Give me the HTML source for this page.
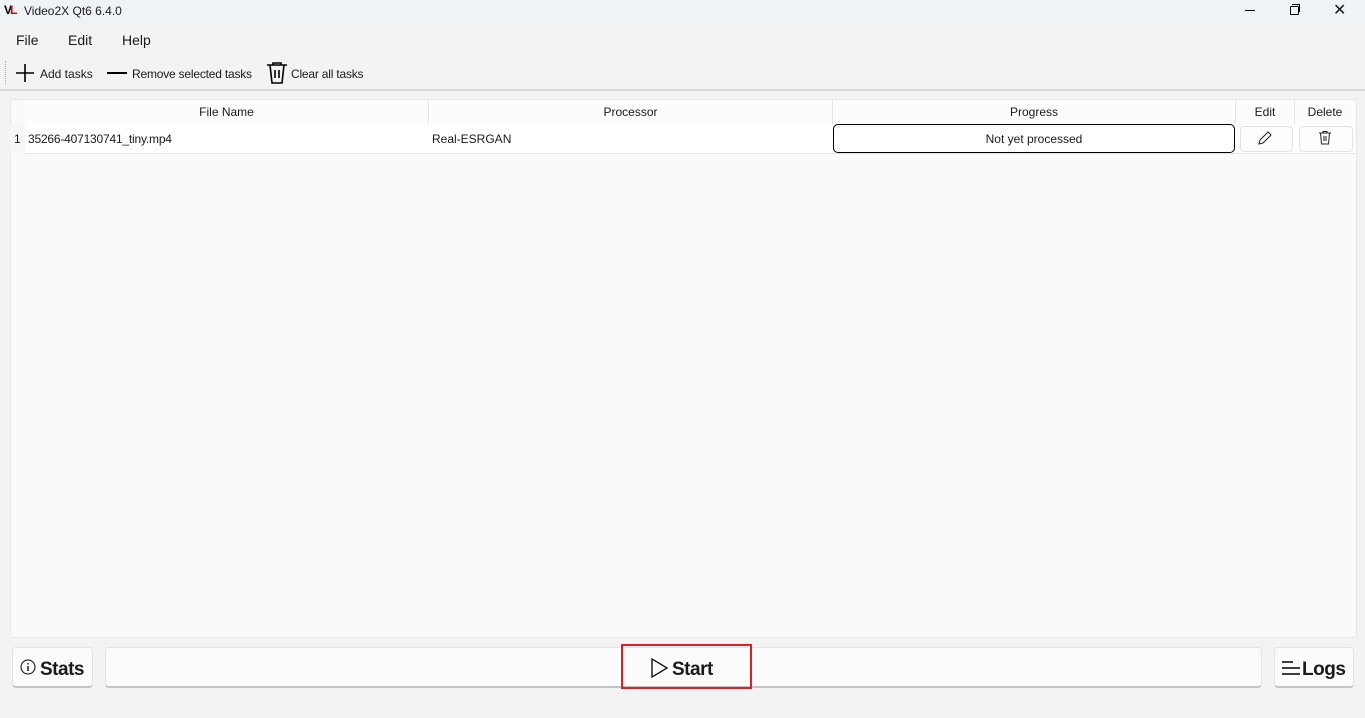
<!DOCTYPE html>
<html><head><style>
body{margin:0;width:1365px;height:718px;background:#f3f3f3;font-family:"Liberation Sans",sans-serif;font-size:12px;color:#1a1a1a;position:relative;overflow:hidden}
.a{position:absolute}
.title{left:0;top:0;width:1365px;height:24px;background:#eff3f8}
.hd{top:100px;height:24px;line-height:24px;text-align:center;border-right:1px solid #e5e5e5;border-bottom:1px solid #e5e5e5;background:#fcfcfc}
.btn{background:#fbfbfb;border:1px solid #e3e3e3;border-bottom:2px solid #c4c4c4;border-radius:4px;height:38px;top:647px}
.bt{font-weight:bold;font-size:19px;top:659px;letter-spacing:-0.5px}
</style></head><body>
<div class="a title"></div>
<div class="a" style="left:4px;top:3px;font-weight:bold;font-size:12px;color:#000;letter-spacing:-2px">V<span style="color:#c00">L</span></div>
<div class="a" style="left:24px;top:4px">Video2X Qt6 6.4.0</div>
<div class="a" style="left:1245px;top:10px;width:10px;height:1px;background:#000"></div>
<div class="a" style="left:1290px;top:6px;width:7px;height:7px;border:1px solid #000;border-radius:1px"></div>
<div class="a" style="left:1292px;top:4px;width:7px;height:7px;border-top:1px solid #000;border-right:1px solid #000"></div>
<div class="a" style="left:1333px;top:0px;font-size:16px">✕</div>
<div class="a" style="left:16px;top:32px;font-size:14px">File</div>
<div class="a" style="left:68px;top:32px;font-size:14px">Edit</div>
<div class="a" style="left:122px;top:32px;font-size:14px">Help</div>
<div class="a" style="left:0;top:57px;width:1365px;height:32px;border-bottom:2px solid #d8d8d8"></div>
<div class="a" style="left:5px;top:61px;height:24px;border-left:1px dotted #aaa"></div>
<svg class="a" style="left:15px;top:63px" width="20" height="20"><path d="M10 1V19M1 10H19" stroke="#000" stroke-width="1.6"/></svg>
<div class="a" style="left:40px;top:67px">Add tasks</div>
<div class="a" style="left:107px;top:72px;width:20px;height:2px;background:#000"></div>
<div class="a" style="left:132px;top:67px;letter-spacing:-0.2px">Remove selected tasks</div>
<svg class="a" style="left:265px;top:61px" width="24" height="24"><path d="M2 4H22M8 4V2H16V4M5 4L7 22H17L19 4M10 9V17M14 9V17" stroke="#000" stroke-width="1.6" fill="none"/></svg>
<div class="a" style="left:291px;top:67px;letter-spacing:-0.2px">Clear all tasks</div>
<div class="a" style="left:10px;top:99px;width:1345px;height:537px;background:#fafafa;border:1px solid #e8e8e8;border-radius:3px"></div>
<div class="a hd" style="left:25px;width:403px">File Name</div>
<div class="a hd" style="left:429px;width:403px">Processor</div>
<div class="a hd" style="left:833px;width:402px">Progress</div>
<div class="a hd" style="left:1236px;width:58px">Edit</div>
<div class="a hd" style="left:1295px;width:60px;border-right:none">Delete</div>
<div class="a" style="left:10px;top:124px;width:15px;height:29px;background:#f6f6f6"></div>
<div class="a" style="left:14px;top:132px">1</div>
<div class="a" style="left:25px;top:124px;width:1330px;height:29px;border-bottom:1px solid #e5e5e5;background:#fff"></div>
<div class="a" style="left:28px;top:132px;letter-spacing:-0.2px">35266-407130741_tiny.mp4</div>
<div class="a" style="left:432px;top:132px">Real-ESRGAN</div>
<div class="a" style="left:833px;top:124px;width:400px;height:27px;border:1px solid #000;border-radius:5px;text-align:center;line-height:28px;background:#fff">Not yet processed</div>
<div class="a" style="left:1240px;top:126px;width:51px;height:24px;border:1px solid #e3e3e3;border-radius:4px;background:#fdfdfd"></div>
<svg class="a" style="left:1257px;top:130px" width="16" height="16"><path d="M2 14L3 10L11 2L14 5L6 13Z" stroke="#222" fill="none"/></svg>
<div class="a" style="left:1299px;top:126px;width:52px;height:24px;border:1px solid #e3e3e3;border-radius:4px;background:#fdfdfd"></div>
<svg class="a" style="left:1317px;top:130px" width="16" height="16"><path d="M2 3H14M6 3V1.5H10V3M3.5 3L4.5 14H11.5L12.5 3M7 6V11M9 6V11" stroke="#222" fill="none"/></svg>
<div class="a btn" style="left:12px;width:79px"></div>
<svg class="a" style="left:20px;top:659px" width="18" height="18"><circle cx="8" cy="8" r="7" stroke="#000" fill="none"/><path d="M8 7V12M8 4V5.5" stroke="#000" stroke-width="1.3"/></svg>
<div class="a bt" style="left:40px">Stats</div>
<div class="a btn" style="left:105px;width:1155px"></div>
<div class="a" style="left:621px;top:644px;width:127px;height:41px;border:2px solid #e02020"></div>
<svg class="a" style="left:650px;top:657px" width="20" height="22"><path d="M2 2L17 11L2 20Z" stroke="#000" stroke-width="1.3" fill="none"/></svg>
<div class="a bt" style="left:672px">Start</div>
<div class="a btn" style="left:1274px;width:78px"></div>
<svg class="a" style="left:1281px;top:660px" width="20" height="16"><path d="M1 2H12M1 8H19M1 14H19" stroke="#000" stroke-width="1.5"/></svg>
<div class="a bt" style="left:1302px">Logs</div>
</body></html>
